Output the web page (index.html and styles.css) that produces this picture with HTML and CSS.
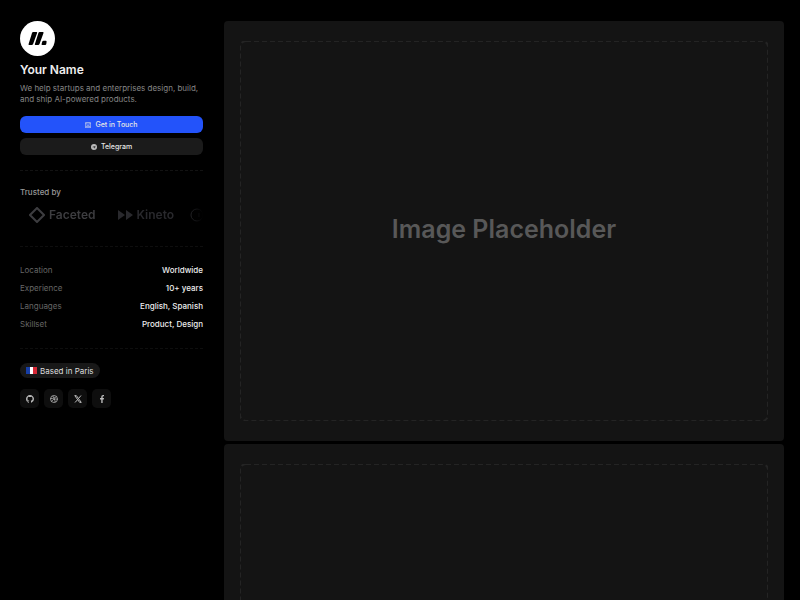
FILE: index.html
```html
<!DOCTYPE html>
<html lang="en">
<head>
    <meta charset="UTF-8">
    <meta name="viewport" content="width=device-width, initial-scale=1.0">
    <title>Your Name</title>
    <link rel="stylesheet" href="styles.css">
</head>
<body>
    <div class="page">
        <aside class="sidebar">
            <!-- Profile -->
            <header class="profile">
                <svg class="avatar" viewBox="0 0 35 35" aria-hidden="true">
                    <circle cx="17.5" cy="17.5" r="17.5" fill="#fff"/>
                    <path d="M13.200 11h3.300q.9 0 .6 1l-4 11q-.4 1-1.400 1H9.200q-1 0-.6-1l3.400-11q.3-1 1.200-1zM19.600 11h3.300q.9 0 .6 1l-4 11q-.4 1-1.400 1h-2.600q-1 0-.6-1l3.500-11q.3-1 1.200-1z" fill="#000"/>
                    <path d="M23.600 19.800h2.200q.9 0 .8 1l-.3 2.200q-.2 1-1.200 1h-2.800q-1 0-.7-1l.6-2.200q.3-1 1.400-1z" fill="#000"/>
                </svg>
                <h1>Your Name</h1>
                <p>We help startups and enterprises design, build, and ship AI-powered products.</p>
            </header>

            <div class="actions">
                <button type="button" class="button button-primary">
                    <svg viewBox="0 0 12 12" fill="none" stroke="currentColor" aria-hidden="true">
                        <path d="M1 1h10v10H1zM1 2l5 5 5-5M1 11l4-5M11 11L7 6M4 1v3M8 1v3M3 9h6"/>
                    </svg>
                    Get in Touch
                </button>
                <button type="button" class="button">
                    <svg viewBox="0 0 12 12" aria-hidden="true">
                        <circle cx="6" cy="6" r="6" fill="#bbb"/>
                        <path d="M2.500 6l6.500-2.700L8 9 5.800 7.500 7.500 5 4.600 7z" fill="#333"/>
                    </svg>
                    Telegram
                </button>
            </div>

            <!-- Client logos -->
            <section class="trusted">
                <h2>Trusted by</h2>
                <div class="logos">
                    <span class="logo">
                        <svg width="16" height="16" viewBox="0 0 16 16" fill="none" stroke="currentColor" stroke-width="2" aria-hidden="true"><path d="M8 1l7 7-7 7-7-7z"/></svg>
                        Faceted
                    </span>
                    <span class="logo logo-dim">
                        <svg width="16" height="10" viewBox="0 0 16 10" fill="currentColor" aria-hidden="true"><path d="M1 0l7 5-7 5zM9 0l7 5-7 5z"/></svg>
                        Kineto
                    </span>
                    <span class="logo logo-faint">
                        <svg width="14" height="14" viewBox="0 0 14 14" fill="none" stroke="currentColor" aria-hidden="true"><circle cx="7" cy="7" r="6"/><path d="M9 5v4"/></svg>
                    </span>
                </div>
            </section>

            <dl class="facts">
                <div><dt>Location</dt><dd>Worldwide</dd></div>
                <div><dt>Experience</dt><dd>10+ years</dd></div>
                <div><dt>Languages</dt><dd>English, Spanish</dd></div>
                <div><dt>Skillset</dt><dd>Product, Design</dd></div>
            </dl>

            <footer class="contact">
                <span class="place">
                    <svg viewBox="0 0 11 7" aria-hidden="true">
                        <path d="M0 0h4v7H0z" fill="#173ea5"/>
                        <path d="M4 0h3v7H4z" fill="#fff"/>
                        <path d="M7 0h4v7H7z" fill="#d52735"/>
                    </svg>
                    Based in Paris
                </span>
                <nav class="social">
                    <a href="#" aria-label="GitHub">
                        <svg viewBox="0 0 16 16" fill="currentColor"><path d="M8 0C3.580 0 0 3.580 0 8c0 3.540 2.290 6.530 5.470 7.590.4.070.55-.17.55-.38 0-.19-.01-.82-.01-1.490-2.010.37-2.530-.49-2.690-.94-.09-.23-.48-.94-.82-1.130-.28-.15-.68-.52-.01-.53.63-.01 1.080.58 1.230.82.72 1.210 1.870.87 2.330.66.070-.52.28-.87.51-1.070-1.780-.2-3.640-.89-3.640-3.950 0-.87.31-1.590.82-2.150-.08-.2-.36-1.020.08-2.120 0 0 .67-.21 2.200.82a7.600 7.600 0 0 1 4 0c1.530-1.040 2.200-.82 2.200-.82.44 1.100.16 1.920.08 2.120.51.56.82 1.270.82 2.150 0 3.070-1.870 3.750-3.650 3.950.29.25.54.73.54 1.480 0 1.070-.01 1.930-.01 2.200 0 .21.15.46.55.38A8 8 0 0 0 16 8c0-4.420-3.580-8-8-8z"/></svg>
                    </a>
                    <a href="#" aria-label="Dribbble">
                        <svg viewBox="0 0 16 16" fill="none" stroke="currentColor" stroke-width="1.500"><circle cx="8" cy="8" r="7"/><path d="M5 1.500c3 3.500 4.500 7.500 5.500 13M1 7c5 .2 9-.8 12-4M3 13c2.500-4.500 6.500-6 12-4.500"/></svg>
                    </a>
                    <a href="#" aria-label="X">
                        <svg viewBox="0 0 16 16" fill="none" stroke="currentColor" stroke-width="2"><path d="M1.500 1.200h3.200l9.800 13.600h-3.200zM14 1L9 7M7 9.500L2 15"/></svg>
                    </a>
                    <a href="#" aria-label="Facebook">
                        <svg viewBox="0 0 16 16" fill="currentColor"><path d="M6.500 16V9H4V6.200h2.500V4c0-2.600 1.500-4 3.800-4 .9 0 1.700.1 1.700.1v2.500h-1.200c-1.200 0-1.500.7-1.500 1.500v2.100H12L11.600 9H9.300v7z"/></svg>
                    </a>
                </nav>
            </footer>
        </aside>

        <main class="gallery">
            <figure class="card">
                <svg class="card-frame" aria-hidden="true"><rect x="0" y="0" width="100%" height="100%" rx="6"/></svg>
                <figcaption>Image Placeholder</figcaption>
            </figure>
            <figure class="card">
                <svg class="card-frame" aria-hidden="true"><rect x="0" y="0" width="100%" height="100%" rx="6"/></svg>
            </figure>
        </main>
    </div>
</body>
</html>
```
FILE: styles.css
```css
* {
    box-sizing: border-box;
}

body {
    margin: 0;
    background-color: #000;
    color: #eee;
    font-family: Inter, "Liberation Sans", sans-serif;
    font-size: 8px;
    line-height: 12px;
}

h1, h2, p, dl, dd, figure {
    margin: 0;
}

.page {
    display: grid;
    grid-template-columns: 224px 1fr;
    height: 100vh;
    overflow: hidden;
}

.sidebar {
    padding: 21px 21px 0 20px;
}

/* Profile */
.avatar {
    display: block;
    width: 35px;
    height: 35px;
}

.profile h1 {
    margin-top: 6px;
    font-size: 12px;
    font-weight: 600;
    line-height: 16px;
}

.profile p {
    margin-top: 5px;
    color: #858585;
    line-height: 11px;
}

.actions {
    display: grid;
    gap: 5px;
    margin-top: 11px;
    padding-bottom: 15px;
}

.button {
    display: flex;
    align-items: center;
    justify-content: center;
    gap: 4px;
    height: 17px;
    padding: 0;
    border: none;
    border-radius: 6px;
    background-color: #1b1b1b;
    color: #e6e6e6;
    font: 500 7px Inter, "Liberation Sans", sans-serif;
    cursor: pointer;
}

.button-primary {
    background-color: #2353fa;
}

.button svg {
    width: 6px;
    height: 6px;
}

/* Client logos */
.trusted {
    padding: 15px 0 23px;
    border-top: 1px dashed #121212;
}

.trusted h2 {
    color: #999;
    font-size: 8px;
    font-weight: 500;
}

.logos {
    display: flex;
    align-items: center;
    gap: 21px;
    height: 16px;
    margin-top: 9px;
    padding-left: 9px;
    overflow: hidden;
    -webkit-mask-image: linear-gradient(to right, #000 90%, transparent);
    mask-image: linear-gradient(to right, #000 90%, transparent);
}

.logo {
    display: flex;
    flex-shrink: 0;
    align-items: center;
    gap: 4px;
    color: #3d3d40;
    font-size: 12px;
    font-weight: 600;
}

.logo-dim {
    color: #29292d;
}

.logo-faint {
    margin-left: -5px;
    color: #333337;
}

/* Facts */
.facts {
    display: grid;
    gap: 6px;
    padding: 17px 0 18px;
    border-top: 1px dashed #0e0e0e;
    border-bottom: 1px dashed #0e0e0e;
}

.facts div {
    display: flex;
    justify-content: space-between;
}

.facts dt {
    color: #666;
}

.facts dd {
    font-weight: 500;
}

/* Place and social links */
.contact {
    padding-top: 14px;
}

.place {
    display: flex;
    align-items: center;
    gap: 3px;
    width: fit-content;
    height: 15px;
    padding: 0 6px;
    border-radius: 8px;
    background-color: #181818;
    color: #ddd;
}

.place svg {
    width: 11px;
    height: 7px;
}

.social {
    display: flex;
    gap: 5px;
    margin-top: 11px;
}

.social a {
    display: grid;
    place-items: center;
    width: 19px;
    height: 19px;
    border-radius: 5px;
    background-color: #0e0e0e;
    color: #bbb;
}

.social svg {
    width: 8px;
    height: 8px;
}

/* Gallery */
.gallery {
    display: grid;
    align-content: start;
    gap: 3px;
    padding: 21px 16px 0 0;
}

.card {
    display: grid;
    place-items: center;
    aspect-ratio: 4 / 3;
    padding: 20px 16px;
    border-radius: 4px;
    background-color: #141414;
}

.card-frame,
.card figcaption {
    grid-area: 1 / 1;
}

.card-frame {
    width: 100%;
    height: 100%;
}

.card-frame rect {
    fill: none;
    stroke: #242424;
    stroke-width: 2;
    stroke-dasharray: 5 3;
}

.card figcaption {
    padding-bottom: 4px;
    color: #585858;
    font-size: 25px;
    font-weight: 600;
    line-height: 32px;
}
```
